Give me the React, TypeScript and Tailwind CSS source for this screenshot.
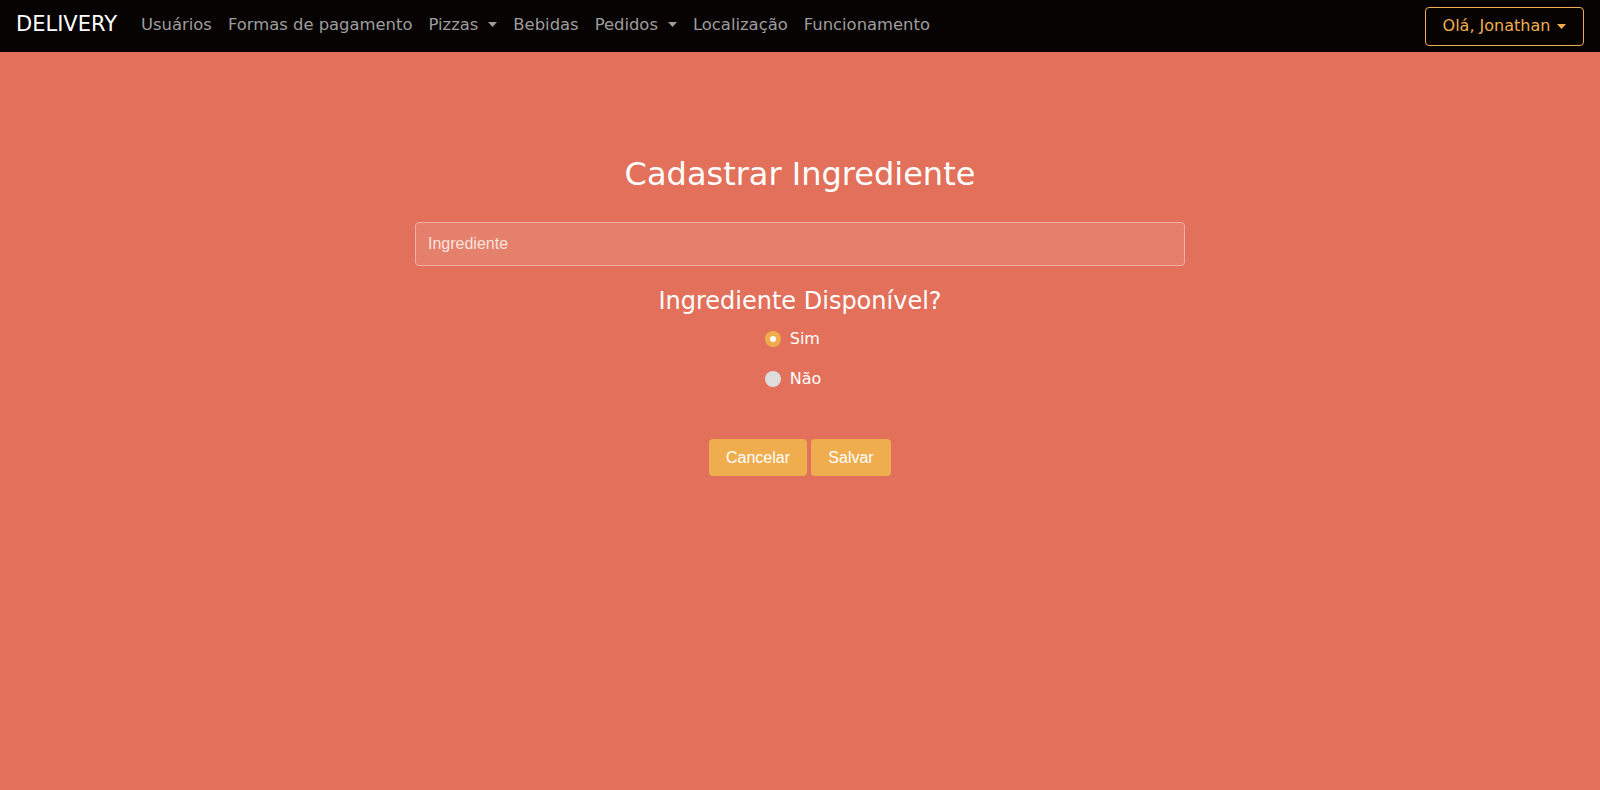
import { useState } from 'react'

const links = [
  { label: 'Usuários' },
  { label: 'Formas de pagamento' },
  { label: 'Pizzas', caret: true },
  { label: 'Bebidas' },
  { label: 'Pedidos', caret: true },
  { label: 'Localização' },
  { label: 'Funcionamento' },
]

function Caret({ className = '' }: { className?: string }) {
  return (
    <svg width="9" height="5" viewBox="0 0 9 5" className={className}>
      <path d="M0 0h9L4.5 5z" fill="currentColor" />
    </svg>
  )
}

function Radio({ checked, label, onClick }: { checked: boolean; label: string; onClick: () => void }) {
  return (
    <label onClick={onClick} className="flex items-center gap-[9px] cursor-pointer">
      {checked ? (
        <span className="flex h-4 w-4 items-center justify-center rounded-full bg-[#f0ad4e]">
          <span className="h-[6px] w-[6px] rounded-full bg-white" />
        </span>
      ) : (
        <span className="h-4 w-4 rounded-full bg-[#dddddd]" />
      )}
      <span className="text-[16px] text-white">{label}</span>
    </label>
  )
}

export default function App() {
  const [available, setAvailable] = useState(true)

  return (
    <div className="min-h-[790px] bg-[#e2705a] font-['DejaVu_Sans',sans-serif]">
      {/* Navbar */}
      <nav className="flex h-[52px] items-center justify-between bg-[#070302] pl-4 pr-4">
        <div className="flex items-center pb-[2px]">
          <a className="text-[21px] text-white">DELIVERY</a>
          <ul className="ml-[24px] flex items-center gap-[16px] text-[16.4px] text-[#9d9d9d]">
            {links.map((l) => (
              <li key={l.label} className="flex items-center gap-[10px]">
                {l.label}
                {l.caret && <Caret />}
              </li>
            ))}
          </ul>
        </div>
        <button className="flex h-[39px] w-[159px] items-center justify-center gap-[7px] rounded-[4px] border border-[#f0ad4e] text-[16px] text-[#f0ad4e]">
          Olá, Jonathan
          <Caret />
        </button>
      </nav>

      {/* Form */}
      <main className="mx-auto flex w-[770px] flex-col items-center pt-[103px]">
        <h1 className="text-[32px] leading-[38px] text-white">Cadastrar Ingrediente</h1>
        <input
          placeholder="Ingrediente"
          className="mt-[29px] h-[44px] w-full rounded-[4px] border border-[#f2b0a3] bg-[#e5806c] px-3 font-['Liberation_Sans',sans-serif] text-[16px] text-white placeholder:text-[#fbe4de] outline-none"
        />
        <h2 className="mt-[20px] text-[24px] leading-[30px] text-white">Ingrediente Disponível?</h2>
        <div className="mt-[11px] flex flex-col gap-[16px] pr-[14px]">
          <Radio checked={available} label="Sim" onClick={() => setAvailable(true)} />
          <Radio checked={!available} label="Não" onClick={() => setAvailable(false)} />
        </div>
        <div className="mt-[48px] flex gap-[4px] font-['Liberation_Sans',sans-serif] text-[16px] text-white">
          <button className="h-[37px] w-[98px] rounded-[4px] bg-[#f0ad4e]">Cancelar</button>
          <button className="h-[37px] w-[80px] rounded-[4px] bg-[#f0ad4e]">Salvar</button>
        </div>
      </main>
    </div>
  )
}
